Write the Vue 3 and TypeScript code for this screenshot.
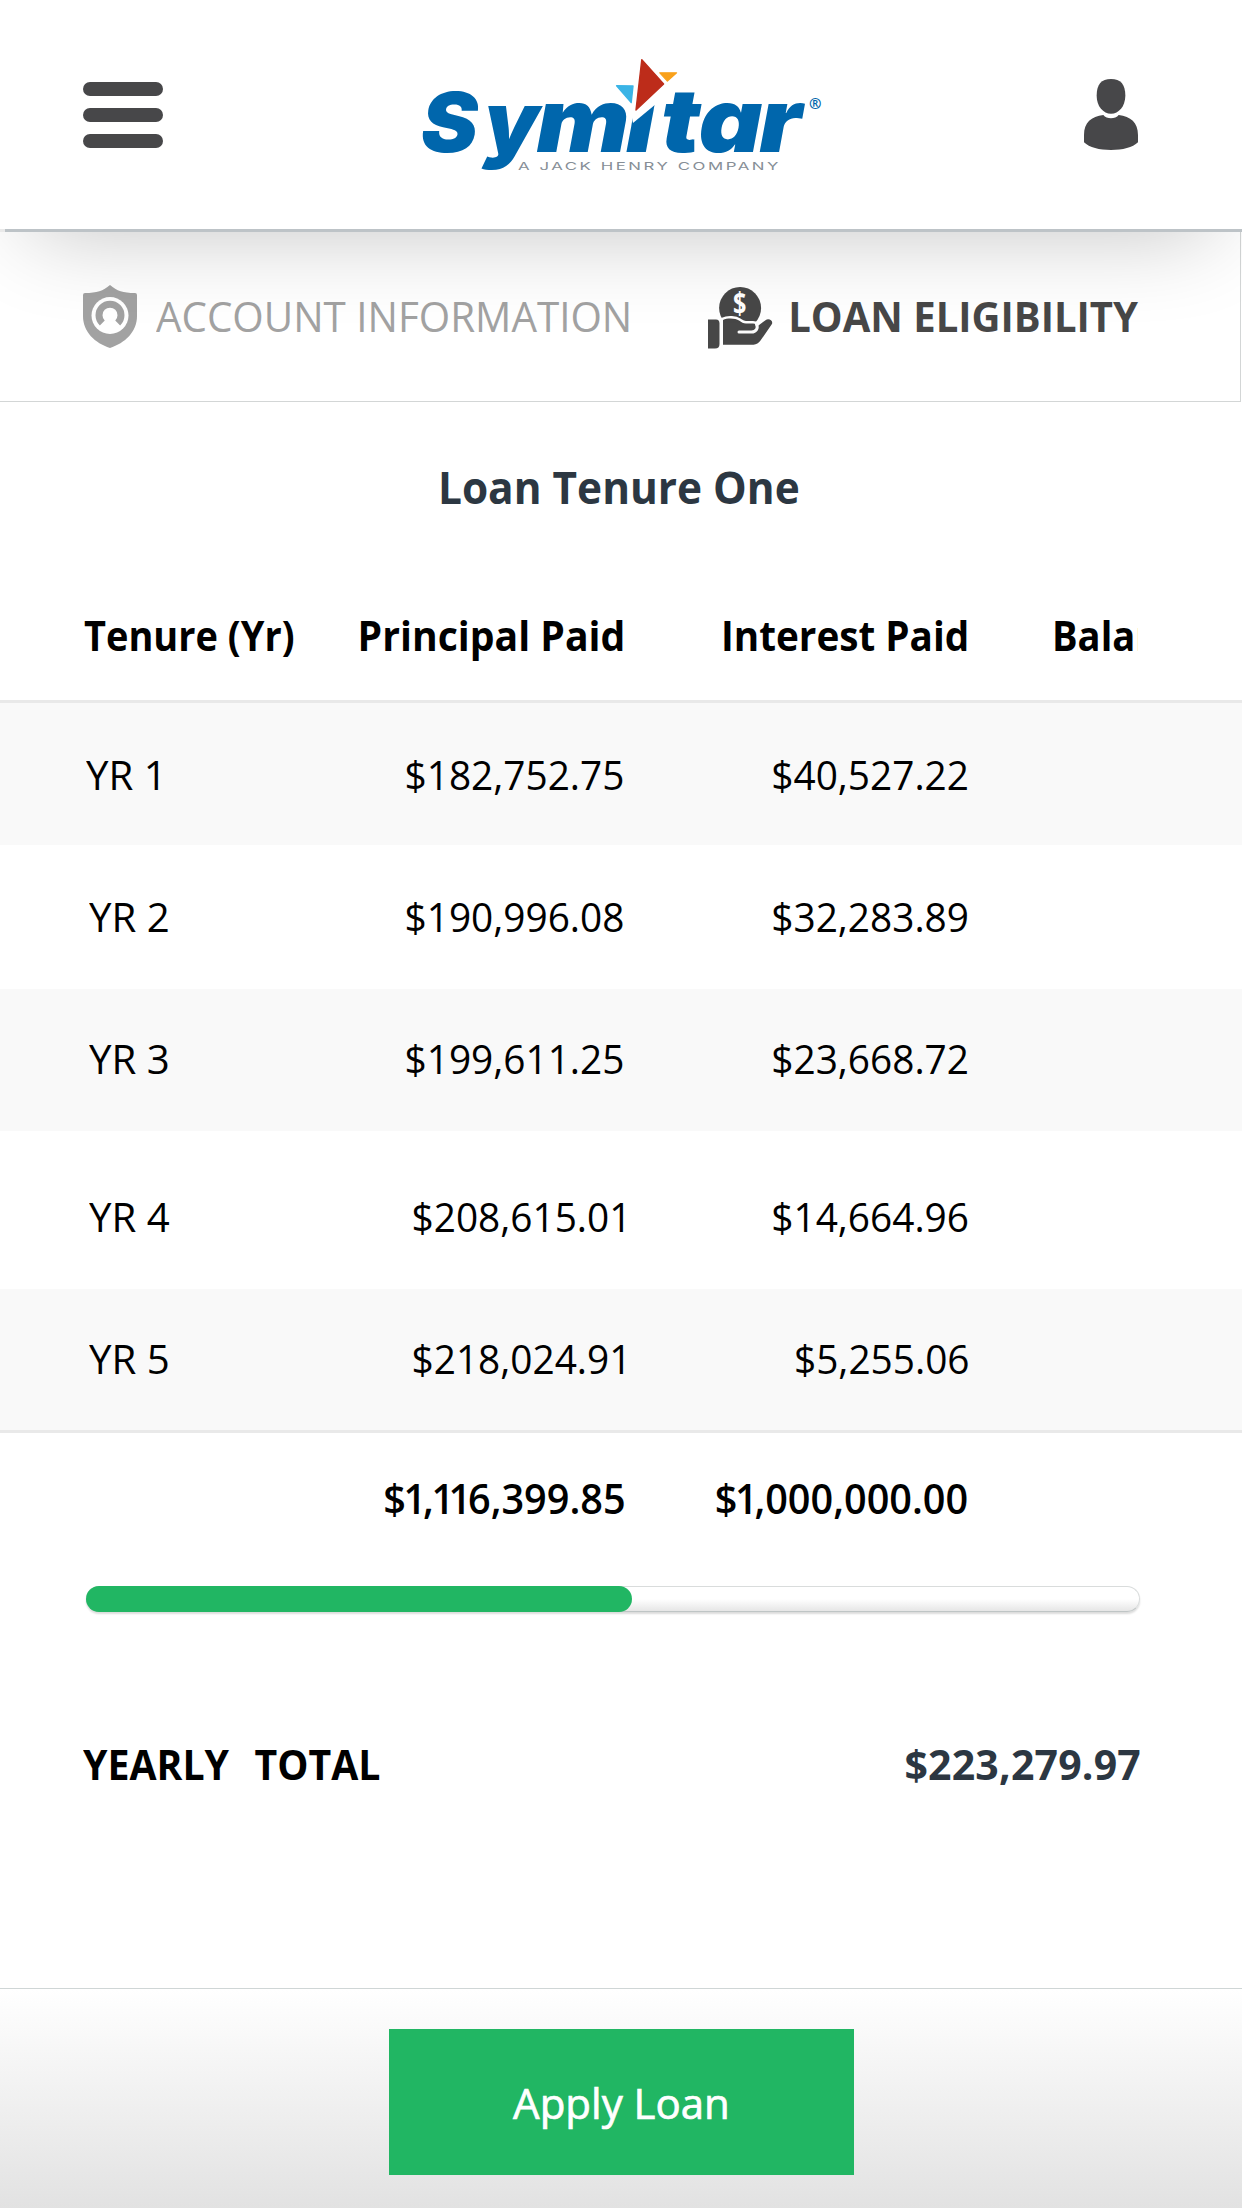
<script setup lang="ts">
interface Row { tenure: string; principal: string; interest: string }

const rows: Row[] = [
  { tenure: 'YR 1', principal: '$182,752.75', interest: '$40,527.22' },
  { tenure: 'YR 2', principal: '$190,996.08', interest: '$32,283.89' },
  { tenure: 'YR 3', principal: '$199,611.25', interest: '$23,668.72' },
  { tenure: 'YR 4', principal: '$208,615.01', interest: '$14,664.96' },
  { tenure: 'YR 5', principal: '$218,024.91', interest: '$5,255.06' },
]
const progress = 51.9
</script>

<template>
  <div class="page">
    <header class="header">
      <button class="menu" aria-label="Menu"><span></span><span></span><span></span></button>
      <svg class="logo" viewBox="0 0 440 150" role="img" aria-label="Symitar, a Jack Henry company">
        <text class="wordmark" transform="scale(1.03 1)" x="20.5 81.2" y="112"><tspan class="initial">S</tspan>y</text>
        <text class="wordmark wide" transform="scale(1.12 1)" x="121.9 201.7 232.8 266.7 320.8" y="112">mıtar</text>
        <path d="M229 60H256V64L233 83Z" fill="#fff" />
        <path d="M241.8 19.6L263.6 44L236 70Z" fill="#bd2c1a" stroke="#bd2c1a" stroke-width="1.4" stroke-linejoin="round" />
        <path d="M216.6 45.8L233 46L231.2 62.6Z" fill="#3ab4e6" stroke="#3ab4e6" stroke-width="1.4" stroke-linejoin="round" />
        <path d="M259.8 32.8H276.6L267.4 41Z" fill="#f9a11b" stroke="#f9a11b" stroke-width="1.2" stroke-linejoin="round" />
        <text class="reg" x="409" y="69">®</text>
        <text class="tagline" x="118" y="130" textLength="263" lengthAdjust="spacingAndGlyphs">A JACK HENRY COMPANY</text>
      </svg>
      <svg class="person" viewBox="0 0 162 213" aria-label="Profile">
        <path d="M81 0C110 0 124 16 124 50C124 82 104 104 81 104S38 82 38 50C38 16 52 0 81 0Z" />
        <path d="M58 108C68 121 94 121 104 108C140 113 162 130 162 168V190C146 206 116 213 81 213S16 206 0 190V168C0 130 22 113 58 108Z" />
      </svg>
    </header>

    <nav class="tabs">
      <a class="tab">
        <svg class="shield" viewBox="0 0 54 63">
          <path d="M27 0C34 6 40 8 52 8Q54 8 54 10V31C54 47 42 58 27 63C12 58 0 47 0 31V10Q0 8 2 8C14 8 20 6 27 0Z" fill="#a2a2a2" />
          <circle cx="27" cy="30.5" r="18.5" fill="#fff" />
          <path d="M19.3 38A11 11 0 1 1 34.7 38" fill="none" stroke="#a2a2a2" stroke-width="7" />
        </svg>
        <span class="label">ACCOUNT INFORMATION</span>
      </a>
      <a class="tab active">
        <svg class="hand" viewBox="0 0 65 62">
          <circle cx="32.1" cy="21" r="21" fill="#474747" />
          <text class="coin" transform="translate(31.6 27) scale(.78 1)">$</text>
          <path d="M15 33C20 30.5 28 31.5 31 33.5C34 35.5 35 36.5 38 36.5H45C48 36.5 49 39 48.5 40L57.5 33.2C61 30.8 66 34 63.6 37.6L52.5 53.6C50.5 56.4 48.5 57.7 45.5 57.7H15Z" fill="#474747" stroke="#fff" stroke-width="5" paint-order="stroke" />
          <path d="M31 45H43.5C48 45 50.5 41 48.5 37.5" fill="none" stroke="#fbfbfb" stroke-width="3" stroke-linecap="round" />
          <path d="M0 32.5H8Q11.5 32.5 11.5 36.5V57Q11.5 61.5 7 61.5H0Z" fill="#474747" />
        </svg>
        <span class="label">LOAN ELIGIBILITY</span>
      </a>
    </nav>

    <h1 class="title"><span>Loan Tenure One</span></h1>

    <div class="grid head">
      <span class="c1"><b>Tenure (Yr)</b></span>
      <span class="c2"><b>Principal Paid</b></span>
      <span class="c3"><b>Interest Paid</b></span>
      <span class="c4"><b>Balance</b></span>
    </div>

    <div class="rows">
      <div v-for="r in rows" :key="r.tenure" class="grid row">
        <span class="c1"><span class="year">{{ r.tenure }}</span></span>
        <span class="c2"><span class="num">{{ r.principal }}</span></span>
        <span class="c3"><span class="num">{{ r.interest }}</span></span>
      </div>
    </div>

    <div class="grid totals">
      <span class="c1"></span>
      <span class="c2"><span class="num">$<i>1</i>,<i>1</i><i>1</i>6,399.85</span></span>
      <span class="c3"><span class="num">$<i>1</i>,000,000.00</span></span>
    </div>

    <div class="track"><div class="fill" :style="{ width: progress + '%' }"></div></div>

    <div class="yearly">
      <span class="yearly-label"><span>YEARLY</span><span>TOTAL</span></span>
      <span class="yearly-value">$223,279.97</span>
    </div>

    <footer class="footer"><button class="apply">Apply Loan</button></footer>
  </div>
</template>

<style>
body { margin: 0; }
</style>

<style scoped>
.page {
  width: 1242px;
  height: 2208px;
  background: #fff;
  overflow: hidden;
  display: flex;
  flex-direction: column;
  font-family: "Open Sans", "Noto Sans", sans-serif;
  font-size: 41px;
  color: #000;
}
button { border: 0; background: none; padding: 0; font: inherit; }

.header {
  position: relative;
  z-index: 1;
  box-sizing: border-box;
  height: 232px;
  flex: none;
  display: flex;
  justify-content: space-between;
  padding: 0 104px 0 83px;
  background: linear-gradient(90deg, #e9e9e9 5px, #bdc3c7 5px) 0 229px / 100% 3px no-repeat #fff;
  box-shadow: 0 30px 90px -30px rgba(0, 0, 0, .24);
}
.menu { display: flex; flex-direction: column; gap: 12px; width: 80px; height: 66px; margin-top: 82px; }
.menu span { height: 14px; border-radius: 7px; background: #474749; }
.logo { width: 440px; height: 150px; margin: 40px 0 0 -7px; }
.wordmark { font: italic 900 85px Inter, sans-serif; fill: #0066ac; }
.wordmark.wide { font-size: 88px; }
.initial { font-size: 83px; }
.reg { font: 700 15px "Open Sans", sans-serif; fill: #0066ac; }
.tagline { font: 400 10.6px Inter, sans-serif; letter-spacing: 1.6px; fill: #868e96; }
.person { width: 54px; height: 71px; margin-top: 79px; fill: #474749; }

.tabs {
  box-sizing: border-box;
  height: 170px;
  flex: none;
  display: flex;
  justify-content: space-between;
  align-items: flex-start;
  padding: 53px 102px 0 83px;
  border: solid #d3d6d6;
  border-width: 0 1px 1px 0;
  margin-right: 1px;
}
.tab { display: flex; color: #a2a2a2; font-size: 42px; line-height: 62px; }
.label { display: inline-block; transform: scaleX(.961); transform-origin: left; white-space: nowrap; }
.active { color: #474747; font-weight: 700; }
.active .label { transform: scaleX(.953); transform-origin: right; margin-left: -17px; }
.shield { width: 54px; height: 63px; margin-right: 19px; }
.hand { width: 65px; height: 62px; margin: 1.5px 15px 0 0; }
.coin { font: 700 30px "Open Sans", sans-serif; fill: #fff; text-anchor: middle; }

.title { margin: 55px 0 0; padding-right: 4px; line-height: 60px; font-size: 44px; font-weight: 700; text-align: center; color: #2c3742; }
.title span { display: inline-block; transform: scaleX(.963); }

.grid { display: grid; grid-template-columns: 216px 325px 344px 169px; padding-left: 84px; white-space: nowrap; }
.c2, .c3 { text-align: right; }
.head { height: 183px; line-height: 236px; overflow: hidden; border-bottom: 3px solid #e9e9e9; }
.head b, .num { display: inline-block; transform: scaleX(.955); transform-origin: right; }
.head .c1 b { transform: scaleX(.926); transform-origin: left; }
.head .c3 b { transform: scaleX(.943); }
.head .c4 { box-sizing: border-box; padding-left: 83px; width: 169px; height: 183px; overflow: hidden; }
.head .c4 b { transform: scaleX(.93); transform-origin: left; }

.rows { border-bottom: 3px solid #e9e9e9; }
.row { height: 142px; line-height: 142px; }
.row .num { transform: scaleX(.946); }
.row .c1 { padding-left: 4.5px; }
.year { display: inline-block; transform: scaleX(.98); transform-origin: left; }
.row .c2 { padding-right: .5px; }
.row:nth-child(odd) { background: #f9f9f9; }
.row:nth-child(1) .c1 { padding-left: 1.5px; }
.row:nth-child(2) { height: 144px; line-height: 143px; }
.row:nth-child(3) { line-height: 138px; }
.row:nth-child(4) { height: 158px; line-height: 170px; }
.row:nth-child(5) { height: 141px; line-height: 139px; }
.row:nth-child(n + 4) .c2 { padding: 0; margin-right: -6.5px; padding-right: 0; }
.row:nth-child(n + 4) .c3 { padding-left: 6.5px; }

.totals { font-weight: 600; line-height: 60px; margin-top: 35px; }
.totals .num { transform: scaleX(.967); }
.totals i { font-style: normal; margin-left: -2.5px; letter-spacing: -3.3px; }
.totals .c2 { margin-right: -1px; }
.totals .c3 { padding-right: 1px; }

.track {
  height: 26px;
  box-sizing: border-box;
  width: 1054px;
  margin: 58px 0 0 86px;
  border-radius: 13px;
  border: 1px solid #d9dcdc;
  border-bottom-color: #bfc5c5;
  background: linear-gradient(#fff 50%, #e6e6e6);
  box-shadow: 0 2px 2px rgba(0, 0, 0, .14);
}
.fill { height: 26px; margin: -1px; border-radius: 13px; background: #21b663; }

.yearly { display: flex; justify-content: space-between; margin: 122px 101px 0 83px; line-height: 61px; font-weight: 700; }
.yearly-label { display: flex; gap: 26.5px; transform: scaleX(.957); transform-origin: left; }
.yearly-value { color: #2c3742; letter-spacing: .2px; }

.footer {
  margin-top: auto;
  box-sizing: border-box;
  height: 220px;
  padding-top: 40px;
  border-top: 1px solid #cfd6d6;
  background: linear-gradient(#fff, #e2e2e2);
}
.apply { display: block; width: 465px; height: 146px; margin-left: 389px; background: #21b663; color: #fff; font-size: 42px; -webkit-text-stroke: .7px #fff; }
</style>
